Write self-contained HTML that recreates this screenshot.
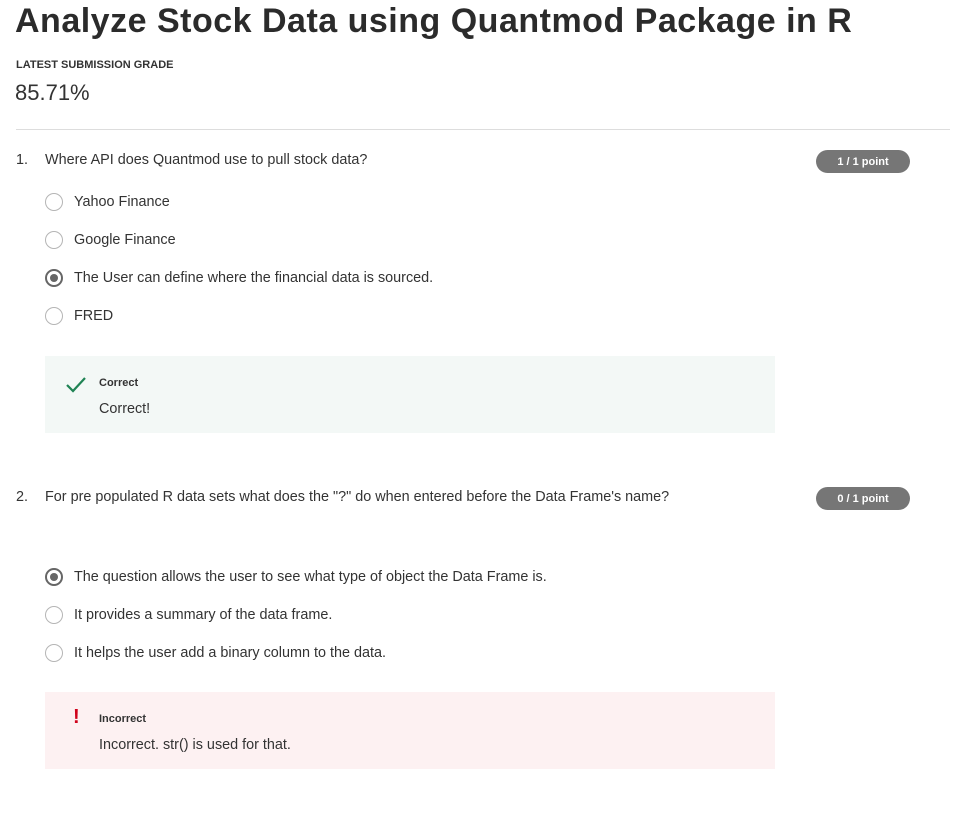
<!DOCTYPE html>
<html><head><style>
body{margin:0;width:980px;height:816px;background:#fff;font-family:"Liberation Sans",sans-serif;color:#333;position:relative;overflow:hidden}
.a{position:absolute;white-space:nowrap}
.t{font-size:14.4px;color:#333}
.r{position:absolute;width:18px;height:18px;border:1.8px solid #b5b5b5;border-radius:50%;box-sizing:border-box}
.r.s{border:2px solid #666}
.r.s::after{content:"";position:absolute;left:3px;top:3px;width:8px;height:8px;border-radius:50%;background:#666}
.b{position:absolute;left:816px;width:94px;height:23px;border-radius:12px;background:#767676;color:#fff;font-size:11px;font-weight:bold;text-align:center;line-height:24px}
</style></head><body>
<div class="a" style="left:15px;top:2px;font-size:34px;font-weight:bold;color:#2b2b2b;letter-spacing:0.5px">Analyze Stock Data using Quantmod Package in R</div>
<div class="a" style="left:16px;top:59px;font-size:11px;font-weight:bold;color:#333">LATEST SUBMISSION GRADE</div>
<div class="a" style="left:15px;top:80px;font-size:22px;color:#333">85.71%</div>
<div class="a" style="left:16px;top:129px;width:934px;height:1px;background:#ddd"></div>

<div class="a t" style="left:16px;top:152px">1.</div>
<div class="a t" style="left:45px;top:152px">Where API does Quantmod use to pull stock data?</div>
<div class="b" style="top:150px">1 / 1 point</div>
<div class="r" style="left:45px;top:193px"></div><div class="a t" style="left:74px;top:194px">Yahoo Finance</div>
<div class="r" style="left:45px;top:231px"></div><div class="a t" style="left:74px;top:232px">Google Finance</div>
<div class="r s" style="left:45px;top:269px"></div><div class="a t" style="left:74px;top:270px">The User can define where the financial data is sourced.</div>
<div class="r" style="left:45px;top:307px"></div><div class="a t" style="left:74px;top:308px">FRED</div>
<div class="a" style="left:45px;top:356px;width:730px;height:77px;background:#f3f8f6"></div>
<svg class="a" style="left:64px;top:375px" width="24" height="18"><path d="M3 10 L9 16 L21 3" fill="none" stroke="#1f8354" stroke-width="2.2"/></svg>
<div class="a" style="left:99px;top:377px;font-size:11px;font-weight:bold;color:#333">Correct</div>
<div class="a t" style="left:99px;top:401px">Correct!</div>

<div class="a t" style="left:16px;top:489px">2.</div>
<div class="a t" style="left:45px;top:489px">For pre populated R data sets what does the "?" do when entered before the Data Frame's name?</div>
<div class="b" style="top:487px">0 / 1 point</div>
<div class="r s" style="left:45px;top:568px"></div><div class="a t" style="left:74px;top:569px">The question allows the user to see what type of object the Data Frame is.</div>
<div class="r" style="left:45px;top:606px"></div><div class="a t" style="left:74px;top:607px">It provides a summary of the data frame.</div>
<div class="r" style="left:45px;top:644px"></div><div class="a t" style="left:74px;top:645px">It helps the user add a binary column to the data.</div>
<div class="a" style="left:45px;top:692px;width:730px;height:77px;background:#fdf1f2"></div>
<div class="a" style="left:73px;top:706px;font-size:20px;font-weight:bold;color:#d0021b">!</div>
<div class="a" style="left:99px;top:713px;font-size:11px;font-weight:bold;color:#333">Incorrect</div>
<div class="a t" style="left:99px;top:737px">Incorrect. str() is used for that.</div>
</body></html>
